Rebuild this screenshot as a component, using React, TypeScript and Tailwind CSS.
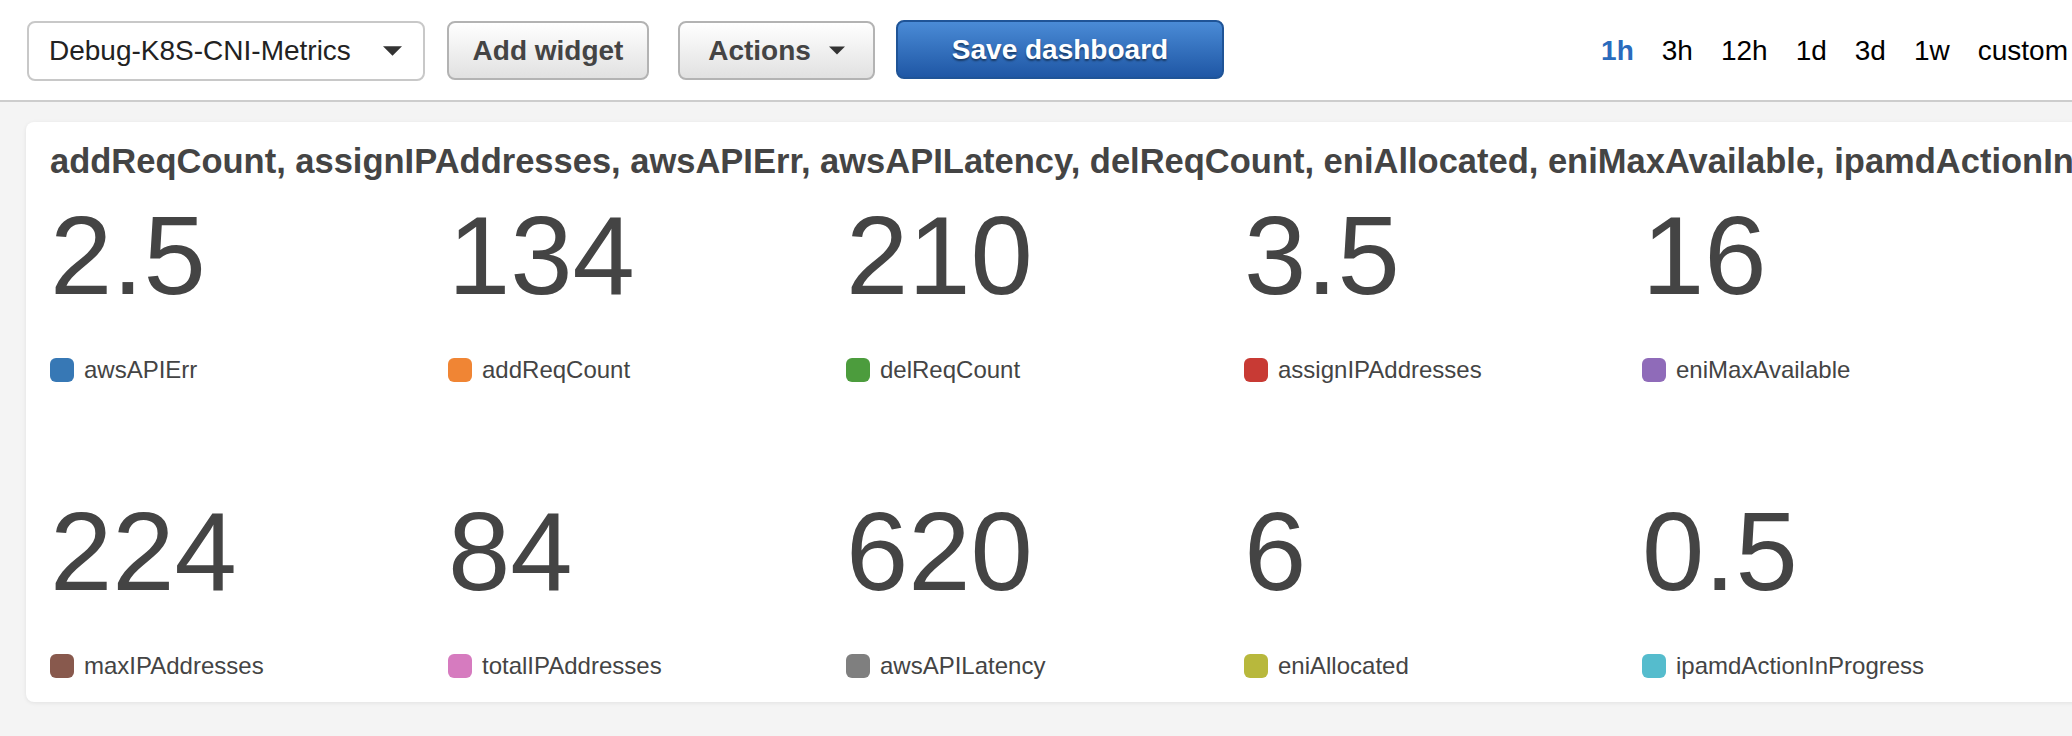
import React from "react";

const metrics = [
  { value: "2.5", label: "awsAPIErr", color: "bg-[#3778b5]" },
  { value: "134", label: "addReqCount", color: "bg-[#f08534]" },
  { value: "210", label: "delReqCount", color: "bg-[#4c9c3d]" },
  { value: "3.5", label: "assignIPAddresses", color: "bg-[#c83a34]" },
  { value: "16", label: "eniMaxAvailable", color: "bg-[#8f6bb9]" },
  { value: "224", label: "maxIPAddresses", color: "bg-[#88594d]" },
  { value: "84", label: "totalIPAddresses", color: "bg-[#d67bbf]" },
  { value: "620", label: "awsAPILatency", color: "bg-[#7f7f7f]" },
  { value: "6", label: "eniAllocated", color: "bg-[#b8b83c]" },
  { value: "0.5", label: "ipamdActionInProgress", color: "bg-[#55bccd]" },
];

const ranges = ["1h", "3h", "12h", "1d", "3d", "1w", "custom"];

const Caret: React.FC<{ w: number; h: number }> = ({ w, h }) => (
  <svg width={w} height={h} viewBox="0 0 20 10">
    <path d="M0 0 L20 0 L10 10 Z" fill="#333" />
  </svg>
);

const App: React.FC = () => {
  return (
    <div className="w-[2072px] h-[736px] overflow-hidden bg-[#f4f4f4] font-['Liberation_Sans',Arial,sans-serif]">
      <header className="h-[102px] bg-white border-b-2 border-[#cdcdcd] flex items-start pt-[21px] pl-[27px] pr-[4px]">
        <div className="w-[398px] h-[60px] border-2 border-[#c8c8c8] rounded-[8px] flex items-center justify-between pl-[20px] pr-[21px] text-[28px] text-[#222]">
          <span>Debug-K8S-CNI-Metrics</span>
          <Caret w={19} h={10} />
        </div>
        <button className="ml-[22px] w-[202px] h-[59px] rounded-[8px] border-2 border-[#b3b3b3] bg-gradient-to-b from-white to-[#e1e1e1] text-[28px] font-bold text-[#444]">
          Add widget
        </button>
        <button className="ml-[29px] w-[197px] h-[59px] rounded-[8px] border-2 border-[#b3b3b3] bg-gradient-to-b from-white to-[#e1e1e1] text-[28px] font-bold text-[#444] flex items-center justify-center gap-[18px]">
          <span>Actions</span>
          <Caret w={16} h={9} />
        </button>
        <button className="ml-[21px] -mt-[1px] w-[328px] h-[59px] rounded-[8px] border-2 border-[#1f5497] bg-gradient-to-b from-[#4a8bd6] to-[#1f57a5] text-[28px] font-bold text-white [text-shadow:0_2px_2px_rgba(0,0,0,0.45)]">
          Save dashboard
        </button>
        <nav className="ml-auto h-[60px] flex items-center gap-[28px] text-[28px] text-black">
          {ranges.map((r, i) => (
            <span key={r} className={i === 0 ? "font-bold text-[#2a6bbd]" : ""}>
              {r}
            </span>
          ))}
        </nav>
      </header>

      {/* widget runs past the right edge, like the reference */}
      <div className="ml-[26px] mt-[20px] w-[2100px] bg-white rounded-[8px] shadow-[0_1px_4px_rgba(0,0,0,0.08)] pt-[21px] px-[24px] pb-[24px]">
        <h2 className="text-[34.5px] leading-[37px] font-bold text-[#444] whitespace-nowrap overflow-hidden">
          addReqCount, assignIPAddresses, awsAPIErr, awsAPILatency, delReqCount, eniAllocated, eniMaxAvailable, ipamdActionInProgress, maxIPAddresses, totalIPAddresses
        </h2>
        <div className="mt-[20px] grid grid-cols-[repeat(5,398px)] gap-y-[114px]">
          {metrics.map((m) => (
            <div key={m.label}>
              <div className="text-[112px] leading-[112px] text-[#444]">{m.value}</div>
              <div className="mt-[46px] flex items-center gap-[10px]">
                <span className={`w-[24px] h-[24px] rounded-[6px] ${m.color}`} />
                <span className="text-[24px] leading-[24px] text-[#444]">{m.label}</span>
              </div>
            </div>
          ))}
        </div>
      </div>
    </div>
  );
};

export default App;
